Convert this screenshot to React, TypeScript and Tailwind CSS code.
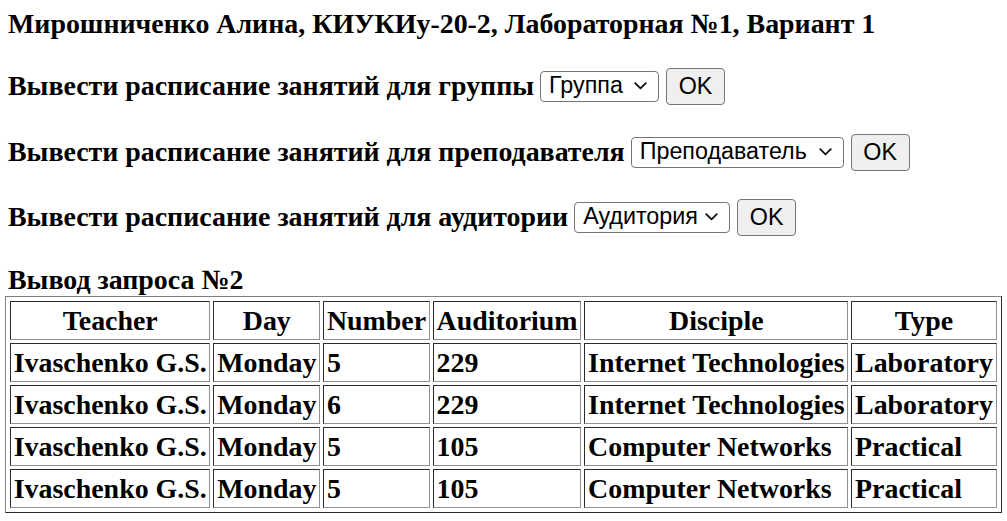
// Lab page: schedule selectors + query result table
const rows = [
  ['Ivaschenko G.S.', 'Monday', '5', '229', 'Internet Technologies', 'Laboratory'],
  ['Ivaschenko G.S.', 'Monday', '6', '229', 'Internet Technologies', 'Laboratory'],
  ['Ivaschenko G.S.', 'Monday', '5', '105', 'Computer Networks', 'Practical'],
  ['Ivaschenko G.S.', 'Monday', '5', '105', 'Computer Networks', 'Practical'],
];

const headers = ['Teacher', 'Day', 'Number', 'Auditorium', 'Disciple', 'Type'];

function Chevron() {
  return (
    <svg width="13" height="8" viewBox="0 0 13 8" fill="none" className="shrink-0">
      <path d="M1.2 1.2 L6.5 6.4 L11.8 1.2" stroke="#111" strokeWidth="1.8" strokeLinecap="round" strokeLinejoin="round" />
    </svg>
  );
}

function FakeSelect({ label, width }: { label: string; width: string }) {
  return (
    <div
      className={`${width} h-[31px] flex items-center justify-between pl-[8px] pr-[11px] border border-[#767676] rounded-[4px] bg-white font-['Liberation_Sans',Arial,sans-serif] font-normal text-[23.3px] leading-none text-black`}
    >
      <span>{label}</span>
      <Chevron />
    </div>
  );
}

function OkButton() {
  return (
    <button className="w-[59px] h-[37px] flex items-center justify-center pt-px border border-[#767676] rounded-[4px] bg-[#efefef] font-['Liberation_Sans',Arial,sans-serif] font-normal text-[23.3px] leading-none text-black">
      OK
    </button>
  );
}

function QueryRow({ label, select, width, className }: { label: string; select: string; width: string; className: string }) {
  return (
    <div className={`h-[38px] flex items-center pl-[3px] ${className}`}>
      <span>{label}</span>
      <div className="ml-[6px]">
        <FakeSelect label={select} width={width} />
      </div>
      <div className="ml-[7px]">
        <OkButton />
      </div>
    </div>
  );
}

export default function App() {
  return (
    <div className="w-[1007px] h-[521px] bg-white text-black font-['Liberation_Serif','Times_New_Roman',serif] font-bold text-[27.9px] pl-[5px] flex flex-col overflow-hidden">
      <div className="h-[38px] mt-[5px] flex items-center pl-[3px]">
        Мирошниченко Алина, КИУКИу-20-2, Лабораторная №1, Вариант 1
      </div>

      <QueryRow label="Вывести расписание занятий для группы" select="Группа" width="w-[119px]" className="mt-[24px]" />
      <QueryRow label="Вывести расписание занятий для преподавателя" select="Преподаватель" width="w-[213px]" className="mt-[28px]" />
      <QueryRow label="Вывести расписание занятий для аудитории" select="Аудитория" width="w-[156px]" className="mt-[27px]" />

      <div className="h-[30px] mt-[29px] flex items-center pl-[3px]">Вывод запроса №2</div>

      <table className="mt-[1px] self-start border-separate border-spacing-[3px] p-px border border-t-[#808080] border-l-[#808080] border-r-[#2b2b2b] border-b-[#2b2b2b] whitespace-nowrap">
        <thead>
          <tr>
            {headers.map((h) => (
              <th
                key={h}
                className="py-[2px] px-[2.75px] leading-[33px] text-center font-bold border border-t-[#2b2b2b] border-l-[#2b2b2b] border-r-[#909090] border-b-[#909090]"
              >
                {h}
              </th>
            ))}
          </tr>
        </thead>
        <tbody>
          {rows.map((r, i) => (
            <tr key={i}>
              {r.map((c, j) => (
                <td
                  key={j}
                  className="py-[2px] px-[2.75px] leading-[33px] text-left font-bold border border-t-[#2b2b2b] border-l-[#2b2b2b] border-r-[#909090] border-b-[#909090]"
                >
                  {c}
                </td>
              ))}
            </tr>
          ))}
        </tbody>
      </table>
    </div>
  );
}
